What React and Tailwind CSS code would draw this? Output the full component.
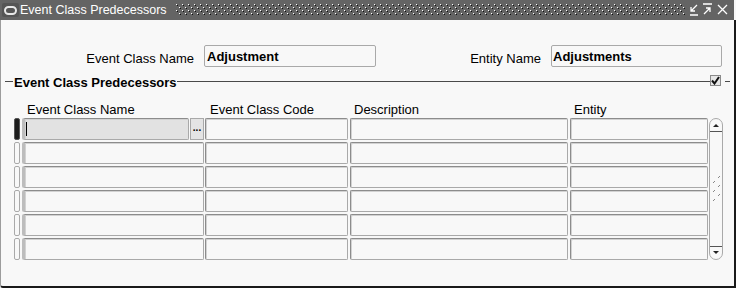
import React from 'react';

const font = "font-['Liberation_Sans',Arial,sans-serif]";

const Dots = () => (
  <svg width="510" height="12" className="block">
    <defs>
      <pattern id="dots" width="6" height="6" patternUnits="userSpaceOnUse">
        <rect x="0" y="0" width="1" height="1" fill="#ffffff" />
        <rect x="1" y="1" width="1" height="1" fill="#111111" />
        <rect x="3" y="3" width="1" height="1" fill="#ffffff" />
        <rect x="4" y="4" width="1" height="1" fill="#111111" />
      </pattern>
    </defs>
    <rect width="510" height="12" fill="url(#dots)" />
  </svg>
);

const TitleButtons = () => (
  <svg width="42" height="14" className="block" stroke="#ffffff" strokeWidth="1.3" fill="none">
    {/* minimize */}
    <path d="M9 2 L3 8 M3 4 L3 8 L7 8 M2 12 L10 12" />
    {/* maximize */}
    <path d="M15 1 L24 1 M16 11 L22 5 M18 5 L22 5 L22 9" />
    {/* close */}
    <path d="M30 2 L39 11 M39 2 L30 11" />
  </svg>
);

const Field = ({ className = '', children }) => (
  <div
    className={`h-[22px] border border-[#a9a9a9] border-t-[#8c8c8c] border-l-[#8c8c8c] rounded-[2px] shadow-[inset_1px_1px_0_#d2d2d2] ${className}`}
  >
    {children}
  </div>
);

const Indicator = ({ active }) => (
  <div
    className={`w-[6px] h-[22px] rounded-[2px] border ${
      active ? 'bg-[#1c1c1c] border-[#555555]' : 'bg-[#f8f8f8] border-[#a9a9a9]'
    }`}
  />
);

const Row = ({ first }) => (
  <div className="flex h-[22px]">
    <Indicator active={first} />
    {first ? (
      <div className="flex ml-[2px]">
        <Field className="w-[167px] bg-[#e2e2e2] border-l-[3px] border-l-[#bdbdbd] relative">
          <div className="absolute left-[1px] top-[3px] w-[1px] h-[14px] bg-black" />
        </Field>
        <div className="w-[14px] h-[22px] ml-[1px] border border-[#a9a9a9] bg-[#e4e4e4] flex items-center justify-center text-[10px] font-bold leading-none pb-[2px]">
          ...
        </div>
      </div>
    ) : (
      <Field className="w-[182px] ml-[2px] border-l-[3px] border-l-[#bdbdbd]" />
    )}
    <Field className="w-[143px] ml-[1px]" />
    <Field className="w-[218px] ml-[2px]" />
    <Field className="w-[138px] ml-[2px]" />
  </div>
);

const Scrollbar = () => (
  <div className="w-[14px] h-[142px] ml-[1px] border border-[#a9a9a9] rounded-[7px] bg-[#f8f8f8] flex flex-col items-center">
    <svg width="12" height="14" className="block">
      <path d="M3 8 L6 5 L9 8 Z" fill="#222" />
      <path d="M0 12.5 L12 12.5" stroke="#555" strokeWidth="1" />
    </svg>
    <div className="flex-1 flex items-center">
      <svg width="12" height="30" className="block" stroke="#888" strokeWidth="1">
        <path d="M8 4 L10 2 M3 9 L5 7 M8 13 L10 11 M3 18 L5 16 M8 22 L10 20 M3 27 L5 25" />
      </svg>
    </div>
    <svg width="12" height="14" className="block">
      <path d="M0 1.5 L12 1.5" stroke="#555" strokeWidth="1" />
      <path d="M3 6 L9 6 L6 9 Z" fill="#222" />
    </svg>
  </div>
);

export default function App() {
  return (
    <div className={`w-[736px] h-[288px] bg-[#f8f8f8] ${font} text-black flex flex-col`}>
      {/* Title bar */}
      <div className="h-[20px] w-[734px] bg-[#646464] flex items-center">
        <div className="w-[17px] h-[14px] ml-[2px] bg-[#555555] rounded-[2px] flex items-center justify-center">
          <div className="w-[13px] h-[9px] rounded-full border-2 border-[#e8e8e8]" />
        </div>
        <span className="w-[156px] ml-[1px] text-[12.5px] leading-[14px] text-white whitespace-nowrap">Event Class Predecessors</span>
        <Dots />
        <div className="ml-[2px]">
          <TitleButtons />
        </div>
      </div>

      {/* Body */}
      <div className="flex-1 flex flex-col border-l border-l-[#9c9c9c] border-r-2 border-r-[#1a1a1a] border-b-2 border-b-[#1a1a1a] rounded-bl-[3px]">
        {/* Header fields */}
        <div className="flex items-start mt-[25px]">
          <span className="w-[193px] text-right text-[13px] leading-[15px] mt-[6px]">Event Class Name</span>
          <div className="w-[172px] h-[22px] ml-[10px] border border-[#a9a9a9] rounded-[2px] bg-[#f8f8f8] pl-[2px] pt-[3px] text-[13px] leading-[15px] font-bold">
            Adjustment
          </div>
          <span className="w-[165px] text-right text-[13px] leading-[15px] mt-[6px]">Entity Name</span>
          <div className="w-[171px] h-[22px] ml-[10px] border border-[#a9a9a9] rounded-[2px] bg-[#f8f8f8] pl-[1px] pt-[3px] text-[13px] leading-[15px] font-bold">
            Adjustments
          </div>
        </div>

        {/* Section header */}
        <div className="flex items-start mt-[8px] h-[15px]">
          <div className="w-[8px] h-[1px] ml-[4px] mt-[6px] bg-[#4a4a4a]" />
          <span className="ml-[1px] text-[13px] leading-[15px] font-bold">Event Class Predecessors</span>
          <div className="flex-1 h-[1px] mt-[6px] bg-[#4a4a4a]" />
          <div className="w-[11px] h-[11px] border border-[#8a8a8a] bg-[#e6e6e6] flex items-center justify-center">
            <svg width="9" height="9" className="block">
              <path d="M1 4.5 L3.5 7.5 L8 1" stroke="#111" strokeWidth="2" fill="none" />
            </svg>
          </div>
          <div className="w-[5px] h-[1px] ml-[4px] mt-[6px] bg-[#4a4a4a]" />
          <div className="w-[4px]" />
        </div>

        {/* Column headers */}
        <div className="flex mt-[12px] ml-[13px] text-[13px] leading-[15px]">
          <span className="w-[196px] pl-[13px]">Event Class Name</span>
          <span className="w-[144px]">Event Class Code</span>
          <span className="w-[220px]">Description</span>
          <span>Entity</span>
        </div>

        {/* Rows */}
        <div className="flex ml-[13px] mt-[1px]">
          <div className="flex flex-col gap-[2px]">
            <Row first />
            <Row />
            <Row />
            <Row />
            <Row />
            <Row />
          </div>
          <Scrollbar />
        </div>
      </div>
    </div>
  );
}
